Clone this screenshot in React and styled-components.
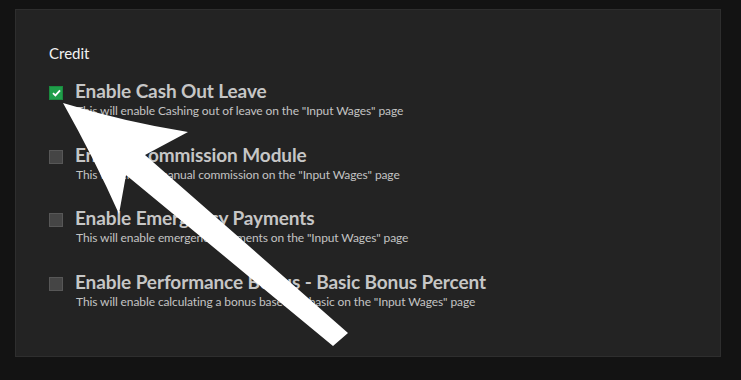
import React from "react";
import styled, { createGlobalStyle } from "styled-components";

const Global = createGlobalStyle`
  html, body { margin: 0; padding: 0; background: #131313; }
  body { font-family: Lato, "Open Sans", sans-serif; width: 741px; height: 380px; overflow: hidden; position: relative; }
`;

const Page = styled.div`
  padding: 9px 20px 0 15px;
  width: 741px;
  height: 380px;
  box-sizing: border-box;
`;

const Panel = styled.section`
  width: 706px;
  height: 348px;
  box-sizing: border-box;
  background: #232323;
  border: 1px solid #2e2e2e;
  padding: 34px 33px 0 33px;
`;

const Heading = styled.h3`
  margin: 0 0 18px 0;
  font-size: 15px;
  line-height: 18px;
  font-weight: 400;
  color: #f2f2f2;
`;

const List = styled.div`
  display: flex;
  flex-direction: column;
  gap: 24.5px;
`;

const Row = styled.label`
  display: flex;
  align-items: flex-start;
  gap: 12px;
`;

const Box = styled.span`
  flex: none;
  width: 14px;
  height: 14px;
  margin-top: 6px;
  box-sizing: border-box;
  border: 1px solid ${(p) => (p.$checked ? "#1a8a3e" : "#575757")};
  background: ${(p) => (p.$checked ? "#1f9e4a" : "#454545")};
  display: flex;
  align-items: center;
  justify-content: center;
`;

const Texts = styled.div`
  display: flex;
  flex-direction: column;
`;

const Title = styled.span`
  font-size: 19px;
  line-height: 22px;
  font-weight: 700;
  color: #c6c6c6;
  letter-spacing: -0.1px;
`;

const Desc = styled.span`
  font-size: 12px;
  line-height: 16px;
  margin-top: 1px;
  letter-spacing: -0.1px;
  color: #c4c4c4;
  margin-left: 1px;
`;

const Arrow = styled.svg`
  position: absolute;
  left: 0;
  top: 0;
  pointer-events: none;
`;

const items = [
  { t: "Enable Cash Out Leave", d: 'This will enable Cashing out of leave on the "Input Wages" page', c: true },
  { t: "Enable Commission Module", d: 'This will enable manual commission on the "Input Wages" page', c: false },
  { t: "Enable Emergency Payments", d: 'This will enable emergency payments on the "Input Wages" page', c: false },
  { t: "Enable Performance Bonus - Basic Bonus Percent", d: 'This will enable calculating a bonus based on basic on the "Input Wages" page', c: false },
];

export default function App() {
  return (
    <>
      <Global />
      <Page>
        <Panel>
          <Heading>Credit</Heading>
          <List>
            {items.map((it) => (
              <Row key={it.t}>
                <Box $checked={it.c}>
                  {it.c && (
                    <svg width="9" height="8" viewBox="0 0 9 8">
                      <path d="M1 4.2 L3.4 6.4 L8 1.4" fill="none" stroke="#fff" strokeWidth="1.8" />
                    </svg>
                  )}
                </Box>
                <Texts>
                  <Title>{it.t}</Title>
                  <Desc>{it.d}</Desc>
                </Texts>
              </Row>
            ))}
          </List>
        </Panel>
      </Page>
      <Arrow width="741" height="380" viewBox="0 0 741 380">
        <path
          d="M63 103 Q125 122 188 132 L145 155 L348 333 L333 346 L126 175 L119 214 Q95 160 63 103 Z"
          fill="#fff"
        />
      </Arrow>
    </>
  );
}
